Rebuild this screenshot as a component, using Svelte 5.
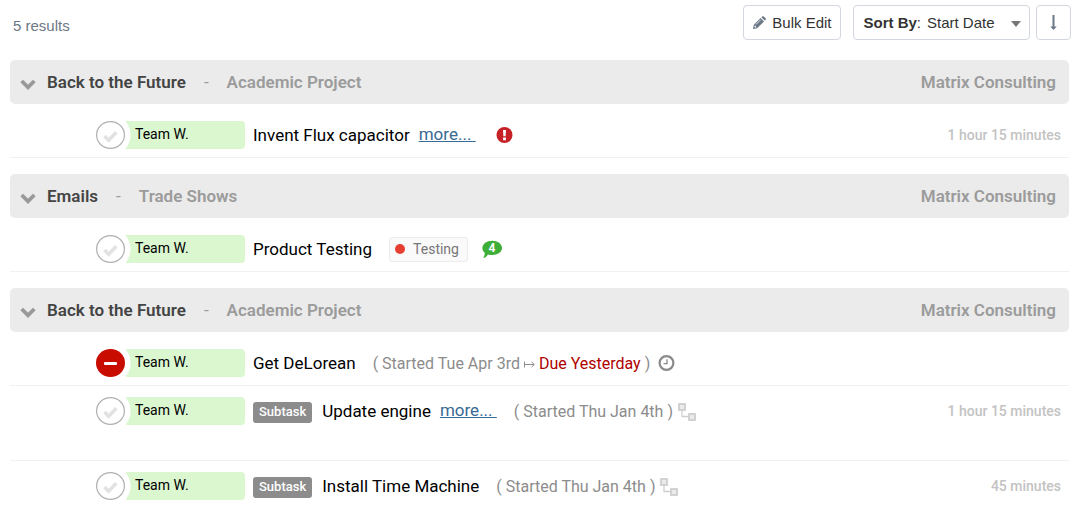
<script>
  let sortBy = 'start';

  const groups = [
    {
      title: 'Back to the Future',
      category: 'Academic Project',
      client: 'Matrix Consulting',
      tasks: [
        { id: 't1', name: 'Invent Flux capacitor', owner: 'Team W.', more: true, alert: true, time: '1 hour 15 minutes' }
      ]
    },
    {
      title: 'Emails',
      category: 'Trade Shows',
      client: 'Matrix Consulting',
      tasks: [
        { id: 't2', name: 'Product Testing', owner: 'Team W.', tag: 'Testing', comments: 4 }
      ]
    },
    {
      title: 'Back to the Future',
      category: 'Academic Project',
      client: 'Matrix Consulting',
      tasks: [
        { id: 't3', name: 'Get DeLorean', owner: 'Team W.', blocked: true, started: 'Tue Apr 3rd', due: 'Yesterday', clock: true },
        { id: 't4', name: 'Update engine', owner: 'Team W.', subtask: true, more: true, started: 'Thu Jan 4th', time: '1 hour 15 minutes', tall: true },
        { id: 't5', name: 'Install Time Machine', owner: 'Team W.', subtask: true, started: 'Thu Jan 4th', time: '45 minutes', last: true }
      ]
    }
  ];
</script>

<div class="page">
  <div class="toolbar">
    <span class="count">5 results</span>
    <button class="btn bulk">
      <svg width="13" height="13" viewBox="0 0 13 13">
        <path d="M0 13 L.8 8.8 L7.6 2 L11 5.4 L4.2 12.2 Z" fill="#6b7885" />
        <path d="M8.4 1.3 L9.3 .4 Q10 -.2 10.7 .4 L12.6 2.3 Q13.2 3 12.6 3.7 L11.7 4.6 Z" fill="#6b7885" />
        <path d="M3 8.4 L7.6 3.8" stroke="#fff" stroke-width=".8" />
        <path d="M1.6 10 L3 11.4" stroke="#fff" stroke-width="1.2" />
      </svg>
      Bulk Edit
    </button>
    <div class="btn sort">
      <label for="sort"><b>Sort By</b>:</label>
      <select id="sort" bind:value={sortBy}>
        <option value="start">Start Date</option>
        <option value="due">Due Date</option>
      </select>
      <svg class="caret" width="10" height="6" viewBox="0 0 10 6"><path d="M0 0 H10 L5 6 Z" fill="#777" /></svg>
    </div>
    <button class="btn direction" aria-label="Sort direction">
      <svg width="7" height="15" viewBox="0 0 7 15">
        <path d="M2.5 0 H4.5 V11.5 H6.7 L3.5 15 L.3 11.5 H2.5 Z" fill="#6b7885" />
      </svg>
    </button>
  </div>

  {#each groups as group}
    <section class="group">
      <header>
        <button class="toggle" aria-label="Collapse group">
          <svg width="16" height="11" viewBox="0 0 16 11">
            <path d="M1.7 2 L8 8.3 L14.3 2" fill="none" stroke="#999" stroke-width="3.8" />
          </svg>
        </button>
        <h2>{group.title}</h2>
        <span class="dash">-</span>
        <span class="category">{group.category}</span>
        <span class="client">{group.client}</span>
      </header>
      <ul>
        {#each group.tasks as task}
          <li class:tall={task.tall} class:last={task.last}>
            {#if task.blocked}
              <button class="status" aria-label="Blocked">
                <svg width="29" height="28" viewBox="0 0 29 28">
                  <ellipse cx="14.5" cy="14" rx="14.5" ry="14" fill="#c80c00" />
                  <rect x="8" y="13" width="13" height="3" rx="1" fill="#fff" />
                </svg>
              </button>
            {:else}
              <label class="status" for={task.id}>
                <input type="checkbox" id={task.id} aria-label={task.name} />
                <svg width="29" height="28" viewBox="0 0 29 28">
                  <ellipse cx="14.5" cy="14" rx="13.9" ry="13.4" fill="#fff" stroke="#b0b0b0" stroke-width="1.2" />
                  <path d="M8.5 15 L12.6 19.2 L20.3 11.3" fill="none" stroke="#e2e2e2" stroke-width="3.6" />
                </svg>
              </label>
            {/if}
            <span class="owner">{task.owner}</span>
            {#if task.subtask}
              <span class="subtask">Subtask</span>
            {/if}
            <span class="name">{task.name}</span>
            {#if task.more}
              <a class="more" href="#more">more...&nbsp;</a>
            {/if}
            {#if task.tag}
              <span class="tag"><i></i>{task.tag}</span>
            {/if}
            {#if task.started}
              <span class="dates">
                ( Started {task.started}
                {#if task.due}
                  <svg class="to" width="11" height="11" viewBox="0 0 11 11">
                    <path d="M.5 2.5 V8.5 M.5 5.5 H10 M7.5 3 L10.3 5.5 L7.5 8" fill="none" stroke="#8c8c8c" />
                  </svg>
                  <span class="due">Due {task.due}</span>
                {/if}
                )
              </span>
            {/if}
            {#if task.alert}
              <svg class="alert" width="17" height="17" viewBox="0 0 17 17">
                <circle cx="8.5" cy="8" r="8" fill="#c62127" />
                <path d="M7 3 H10 L9.6 9.3 H7.4 Z M7.1 10.6 H9.9 V13.3 H7.1 Z" fill="#fff" />
              </svg>
            {/if}
            {#if task.comments}
              <span class="comments">
                <svg width="20" height="18" viewBox="0 0 20 18">
                  <path d="M10.2 .8 C15.8 .8 20 4 20 8 C20 12 15.8 15 10.2 15 C8.7 15 7.3 14.8 6 14.4 C4.9 16.4 3 17.8 1.2 17.8 C2.2 16.5 2.8 15 2.7 12.8 C1.2 11.6 .4 9.9 .4 8 C.4 4 4.7 .8 10.2 .8 Z" fill="#3dae37" />
                </svg>
                <b>{task.comments}</b>
              </span>
            {/if}
            {#if task.clock}
              <svg class="clock" width="17" height="17" viewBox="0 0 17 17">
                <circle cx="8.5" cy="8" r="6.9" fill="none" stroke="#8a8a8a" stroke-width="2.2" />
                <path d="M9 4.2 V8.7 H5.5" fill="none" stroke="#8a8a8a" stroke-width="1.3" />
              </svg>
            {:else if task.started}
              <svg class="tree" width="18" height="18" viewBox="0 0 18 18">
                <path d="M4 7 V13.5 H11" fill="none" stroke="#cfcfcf" stroke-width="1.3" />
                <rect x="1" y="1" width="6" height="6" fill="#ebebeb" stroke="#cfcfcf" stroke-width="1.8" />
                <rect x="11" y="11" width="6" height="6" fill="#ebebeb" stroke="#cfcfcf" stroke-width="1.8" />
              </svg>
            {/if}
            {#if task.time}
              <span class="time">{task.time}</span>
            {/if}
          </li>
        {/each}
      </ul>
    </section>
  {/each}
</div>

<style>
  :global(body) {
    background: #fff;
    overflow-x: hidden;
  }

  .page {
    padding: 5px 9px 0 10px;
    font-family: Roboto, "Liberation Sans", sans-serif;
    white-space: nowrap;
  }

  .toolbar {
    display: flex;
    align-items: center;
    margin-bottom: 20px;
    font: 15px/20px "Liberation Sans", Arial, sans-serif;
  }

  .count {
    margin-right: auto;
    padding: 6px 0 0 3px;
    color: #6b7885;
  }

  .btn {
    display: flex;
    align-items: center;
    box-sizing: border-box;
    height: 35px;
    padding: 0 9px;
    border: 1px solid #d3d7df;
    border-radius: 4px;
    background: #fff;
    color: #333;
    font: inherit;
  }

  .bulk {
    gap: 6px;
    margin-right: 12px;
  }

  .sort {
    margin-right: 6px;
    padding-right: 8px;
  }

  select {
    width: 84px;
    margin-left: 6px;
    padding: 0;
    border: 0;
    background: none;
    color: #333;
    font: inherit;
    appearance: none;
  }

  .caret {
    margin-top: 2px;
  }

  .direction {
    justify-content: center;
    width: 35px;
  }

  .group {
    margin: 0 2px 16px 0;
  }

  .group:last-child {
    margin-bottom: 0;
  }

  header {
    display: flex;
    align-items: center;
    height: 44px;
    padding: 0 13px 0 10px;
    border-radius: 5px;
    background: #ebebeb;
    color: #9b9b9b;
    font-size: 17px;
    font-weight: 600;
  }

  .toggle {
    display: flex;
    margin: 4px 11px 0 0;
    padding: 0;
    border: 0;
    background: none;
  }

  h2 {
    margin: 0;
    color: #444;
    font-size: 17px;
    font-weight: 600;
  }

  .dash {
    margin: 0 18px;
    font-weight: 400;
  }

  .client {
    margin-left: auto;
  }

  ul {
    margin: 0;
    padding: 6px 0 0;
    list-style: none;
  }

  li {
    display: flex;
    align-items: center;
    padding: 11px 8px 8px 86px;
    border-bottom: 1px solid #f0f0f0;
  }

  li.tall {
    padding-bottom: 35px;
  }

  li.last {
    border-bottom: 0;
  }

  .status {
    display: flex;
    height: 28px;
    margin-right: 1px;
    padding: 0;
    border: 0;
    background: none;
  }

  .status input {
    width: 0;
    margin: 0;
    appearance: none;
  }

  .owner {
    box-sizing: border-box;
    width: 119px;
    height: 28px;
    margin-right: 8px;
    padding-left: 9px;
    border-radius: 0 4px 4px 0;
    background: radial-gradient(circle at -16px 14px, #fff 20px, #dbf7d0 21px);
    font-size: 14px;
    line-height: 26px;
  }

  .subtask {
    height: 21px;
    margin: 3px 10px 0 0;
    padding: 0 6px;
    border-radius: 3px;
    background: #8c8c8c;
    color: #fff;
    font-size: 13px;
    font-weight: 500;
    line-height: 19px;
  }

  .name {
    font-size: 17px;
    line-height: 28px;
  }

  .more {
    margin: 0 0 2px 9px;
    color: #386a93;
    font-size: 17px;
    line-height: 26px;
  }

  .tag {
    display: flex;
    align-items: center;
    height: 23px;
    margin-left: 17px;
    padding: 0 8px 0 5px;
    border: 1px solid #ececec;
    border-radius: 3px;
    background: #fafafa;
    color: #777;
    font-size: 14px;
  }

  .tag i {
    width: 10px;
    height: 10px;
    margin-right: 8px;
    border-radius: 50%;
    background: #e63e31;
  }

  .dates {
    margin-left: 17px;
    color: #8c8c8c;
    font-size: 16px;
  }

  .to {
    vertical-align: middle;
  }

  .due {
    color: #ae0000;
  }

  .alert {
    margin-left: 20px;
  }

  .comments {
    display: grid;
    place-items: center;
    margin-left: 14px;
  }

  .comments svg,
  .comments b {
    grid-area: 1 / 1;
  }

  .comments b {
    padding-bottom: 2px;
    color: #fff;
    font-size: 12px;
    line-height: 14px;
  }

  .clock {
    margin-left: 8px;
  }

  .tree {
    margin: 2px 0 0 5px;
  }

  .time {
    margin-left: auto;
    color: #c3c3c3;
    font-size: 14px;
    font-weight: 500;
  }
</style>
